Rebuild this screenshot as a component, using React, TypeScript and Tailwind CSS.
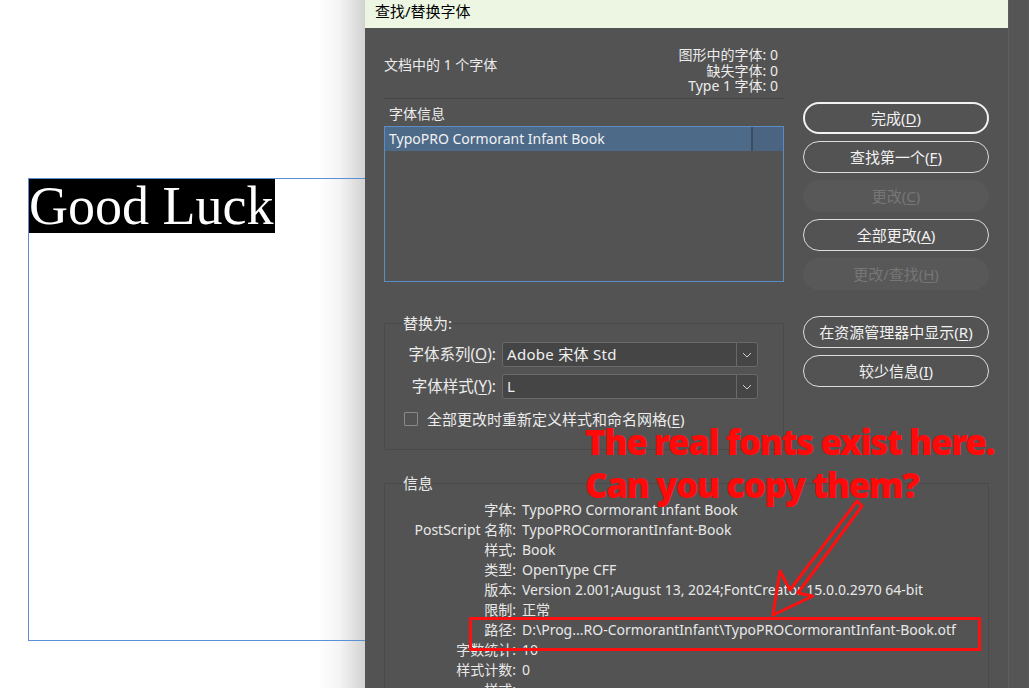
import React from 'react'

const INFO: { label: string; value: string; clip?: boolean }[] = [
  { label: '字体:', value: 'TypoPRO Cormorant Infant Book' },
  { label: 'PostScript 名称:', value: 'TypoPROCormorantInfant-Book' },
  { label: '样式:', value: 'Book' },
  { label: '类型:', value: 'OpenType CFF' },
  { label: '版本:', value: 'Version 2.001;August 13, 2024;FontCreator 15.0.0.2970 64-bit', clip: true },
  { label: '限制:', value: '正常' },
  { label: '路径:', value: 'D:\\Prog...RO-CormorantInfant\\TypoPROCormorantInfant-Book.otf' },
  { label: '字数统计:', value: '10' },
  { label: '样式计数:', value: '0' },
  { label: '样式:', value: '' },
]

function Mnemonic({ text, k }: { text: string; k: string }) {
  return (
    <span>
      {text}(<span className="underline underline-offset-2">{k}</span>)
    </span>
  )
}

function Btn({ text, k, primary, disabled }: { text: string; k: string; primary?: boolean; disabled?: boolean }) {
  let look = 'border border-[#dcdcdc] text-[#f2f2f2]'
  if (primary) look = 'border-2 border-[#f2f2f2] text-[#f2f2f2]'
  if (disabled) look = 'bg-[#585858] text-[#767676]'
  return (
    <div className={`flex h-[32px] items-center justify-center rounded-full text-[15px] ${look}`}>
      <Mnemonic text={text} k={k} />
    </div>
  )
}

function Chevron() {
  return (
    <svg width="10" height="6" viewBox="0 0 10 6" fill="none">
      <path d="M1 1l4 4 4-4" stroke="#cfcfcf" strokeWidth="1" />
    </svg>
  )
}

function Select({ value }: { value: string }) {
  return (
    <div className="flex h-[25px] w-[256px] rounded-[3px] border border-[#696969] bg-[#454545]">
      <div className="w-[233px] pl-[4px] text-[15px] leading-[23px] tracking-[0.3px] text-[#f0f0f0]">{value}</div>
      <div className="w-px bg-[#696969]" />
      <div className="flex flex-1 items-center justify-center">
        <Chevron />
      </div>
    </div>
  )
}

function Canvas() {
  return (
    <div className="h-full w-[365px] shrink-0 overflow-hidden bg-[linear-gradient(to_right,#ffffff_87%,#f4f4f4_93%,#d2d2d2)] pl-[28px] pt-[178px]">
      <div className="h-[463px] w-[420px] border border-[#5b8fd6]">
        <div className="inline-block bg-black pr-[2px] font-['Liberation_Serif',serif] text-[54px] leading-[54px] text-white">
          Good Luck
        </div>
      </div>
    </div>
  )
}

function LeftColumn() {
  return (
    <div className="w-[400px] shrink-0">
      {/* header */}
      <div className="flex h-[70px] items-start justify-between text-[14px] text-[#ececec]">
        <div className="mt-[27px] leading-[20px]">文档中的 1 个字体</div>
        <div className="mt-[19px] pr-[6px] text-right leading-[15.5px]">
          <div>图形中的字体: 0</div>
          <div>缺失字体: 0</div>
          <div>Type 1 字体: 0</div>
        </div>
      </div>
      <div className="h-px bg-[#474747]" />

      {/* font list */}
      <div className="mt-[6px] pl-[5px] text-[14px] leading-[18px] text-[#ececec]">字体信息</div>
      <div className="mt-[3px] h-[156px] border border-[#5b8cc8]">
        <div className="flex h-[24px] bg-[#4e6a89]">
          <div className="w-[366px] pl-[4px] text-[14px] leading-[24px] text-[#f2f2f2]">TypoPRO Cormorant Infant Book</div>
          <div className="w-[2px] bg-[#3d4d5f]" />
          <div className="flex-1 bg-[#4a6482]" />
        </div>
      </div>

      {/* replace with */}
      <fieldset className="mt-[32px] min-w-0 border border-[#4a4a4a] px-[18px] pb-[20px] text-[#ececec]">
        <legend className="text-[15px] leading-[18px]">替换为:</legend>
        <div className="mt-[10px] flex items-center gap-[6px]">
          <div className="w-[93px] whitespace-nowrap text-right text-[15.5px]">
            <Mnemonic text="字体系列" k="O" />:
          </div>
          <Select value="Adobe 宋体 Std" />
        </div>
        <div className="mt-[7px] flex items-center gap-[6px]">
          <div className="w-[93px] whitespace-nowrap text-right text-[15.5px]">
            <Mnemonic text="字体样式" k="Y" />:
          </div>
          <Select value="L" />
        </div>
        <div className="mt-[10px] flex h-[20px] items-center gap-[9px]">
          <div className="ml-[1px] h-[14px] w-[14px] rounded-[1px] border border-[#8a8a8a]" />
          <div className="text-[15px] leading-[20px]">
            <Mnemonic text="全部更改时重新定义样式和命名网格" k="E" />
          </div>
        </div>
      </fieldset>
    </div>
  )
}

function RightColumn() {
  return (
    <div className="ml-[19px] flex w-[186px] shrink-0 flex-col gap-[7px] pt-[74px]">
      <Btn text="完成" k="D" primary />
      <Btn text="查找第一个" k="F" />
      <Btn text="更改" k="C" disabled />
      <Btn text="全部更改" k="A" />
      <Btn text="更改/查找" k="H" disabled />
      <div className="mt-[19px]">
        <Btn text="在资源管理器中显示" k="R" />
      </div>
      <Btn text="较少信息" k="I" />
    </div>
  )
}

function InfoBox() {
  return (
    <fieldset className="mt-[24px] min-w-0 border border-[#4a4a4a] px-[18px] pb-[20px] text-[#e8e8e8]">
      <legend className="text-[15px] leading-[18px]">信息</legend>
      <div className="pt-[8px]">
        {INFO.map((r, i) => (
          <div key={i} className="flex h-[20px] gap-[6px] text-[14px] leading-[20px]">
            <div className="w-[113px] shrink-0 whitespace-nowrap text-right">{r.label}</div>
            <div className={`whitespace-nowrap ${r.clip ? 'max-w-[402px] overflow-hidden' : ''}`}>{r.value}</div>
          </div>
        ))}
      </div>
    </fieldset>
  )
}

function Dialog() {
  return (
    <div className="flex h-full w-[643px] shrink-0 flex-col overflow-hidden bg-[#535353]">
      <div className="h-[28px] shrink-0 bg-[#ecf6e3] px-[10px] pt-[1px] text-[15px] leading-[20px] text-black">查找/替换字体</div>
      <div className="flex flex-col px-[19px]">
        <div className="flex">
          <LeftColumn />
          <RightColumn />
        </div>
        <InfoBox />
      </div>
    </div>
  )
}

function Annotation() {
  return (
    <div className="pointer-events-none absolute inset-0">
      <div className="absolute left-[585px] top-[420px] font-['Noto_Sans',sans-serif] text-[35px] font-black leading-[43px] tracking-[-1.5px] text-[#ff0a0a]">
        <div>The real fonts exist here.</div>
        <div>Can you copy them?</div>
      </div>
      <svg className="absolute inset-0" width="1029" height="688" viewBox="0 0 1029 688" fill="none">
        <rect x="470.5" y="618.5" width="509" height="31" stroke="#ff1010" strokeWidth="3" />
        <path
          d="M857 501 L790 590 L780 571 L773 615 L813 596 L798 593 L862 506 Z"
          stroke="#ff1010"
          strokeWidth="3"
          strokeLinejoin="round"
        />
      </svg>
    </div>
  )
}

export default function App() {
  return (
    <div className="relative flex h-[688px] w-[1029px] overflow-hidden bg-[#535353] font-['Noto_Sans','Noto_Sans_CJK_SC',sans-serif]">
      <Canvas />
      <Dialog />
      <div className="h-full w-[21px] shrink-0 border-l border-[#5e5e5e] bg-[#555555]" />
      <Annotation />
    </div>
  )
}
